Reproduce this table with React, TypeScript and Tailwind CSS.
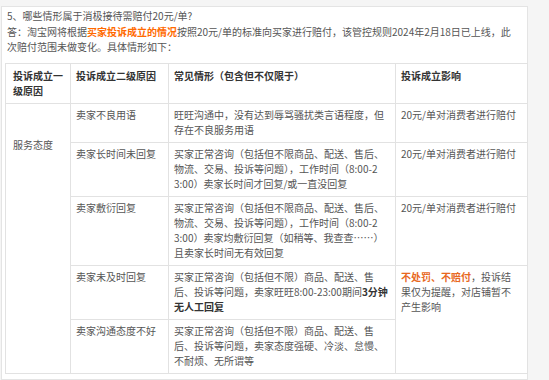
const font = { fontFamily: '"Noto Sans CJK SC", "Noto Sans", sans-serif' };

type Row = {
	reason: string;
	lines: React.ReactNode[];
	effect?: React.ReactNode[];
	effectSpan?: number;
};

const pay = ["20元/单对消费者进行赔付"];

const rows: Row[] = [
	{
		reason: "卖家不良用语",
		lines: ["旺旺沟通中，没有达到辱骂骚扰类言语程度，但", "存在不良服务用语"],
		effect: pay,
	},
	{
		reason: "卖家长时间未回复",
		lines: [
			"买家正常咨询（包括但不限商品、配送、售后、",
			"物流、交易、投诉等问题），工作时间（8:00-2",
			"3:00）卖家长时间才回复/或一直没回复",
		],
		effect: pay,
	},
	{
		reason: "卖家敷衍回复",
		lines: [
			"买家正常咨询（包括但不限商品、配送、售后、",
			"物流、交易、投诉等问题），工作时间（8:00-2",
			"3:00）卖家均敷衍回复（如稍等、我查查……）",
			"且卖家长时间无有效回复",
		],
		effect: pay,
	},
	{
		reason: "卖家未及时回复",
		lines: [
			"买家正常咨询（包括但不限）商品、配送、售",
			<>
				后、投诉等问题，卖家旺旺8:00-23:00期间<b className="text-[#333]">3分钟</b>
			</>,
			<b className="text-[#333]">无人工回复</b>,
		],
		effect: [
			<>
				<b className="text-[#e8681e]">不处罚、不赔付</b>，投诉结
			</>,
			"果仅为提醒，对店铺暂不",
			"产生影响",
		],
		effectSpan: 2,
	},
	{
		reason: "卖家沟通态度不好",
		lines: [
			"买家正常咨询（包括但不限）商品、配送、售",
			"后、投诉等问题，卖家态度强硬、冷淡、怠慢、",
			"不耐烦、无所谓等",
		],
	},
];

function Lines({ lines }: { lines: React.ReactNode[] }) {
	return (
		<>
			{lines.map((l, i) => (
				<div key={i} className="whitespace-nowrap h-[15px]">
					{l}
				</div>
			))}
		</>
	);
}

export default function App() {
	const cell = "border border-[#e2e2e2] align-top pt-[3px] pb-[5px] pl-[5px] pr-[4px]";
	return (
		<div className="w-[549px] h-[380px] bg-[#f5f5f5] pt-[6px] pl-[1px] overflow-hidden" style={font}>
			<div className="w-[527px] bg-white border border-[#e4e4e4] pt-[1px] pb-[5px] text-[10px] leading-[15.5px] text-[#555]">
				<div className="pl-[5px]">
					<div>5、哪些情形属于消极接待需赔付20元/单?</div>
					<div className="whitespace-nowrap">
						答：淘宝网将根据<b className="text-[#ff6a00]">买家投诉成立的情况</b>
						按照20元/单的标准向买家进行赔付，该管控规则2024年2月18日已上线，此
					</div>
					<div>次赔付范围未做变化。具体情形如下：</div>
				</div>
				<table className="ml-[3px] mt-[8px] table-fixed border-collapse w-[522px] leading-[15px]">
					<colgroup>
						<col className="w-[65px]" />
						<col className="w-[98px]" />
						<col className="w-[227px]" />
						<col className="w-[132px]" />
					</colgroup>
					<thead>
						<tr className="text-[#333] font-bold">
							<th className={`${cell} text-left pl-[7px] pt-[4px]`}>
								<div className="h-[15px]">投诉成立一</div>
								<div className="h-[15px]">级原因</div>
							</th>
							<th className={`${cell} text-left pt-[4px]`}>投诉成立二级原因</th>
							<th className={`${cell} text-left pt-[4px]`}>常见情形（包含但不仅限于）</th>
							<th className={`${cell} text-left pt-[4px]`}>投诉成立影响</th>
						</tr>
					</thead>
					<tbody>
						{rows.map((r, i) => (
							<tr key={r.reason}>
								{i === 0 && (
									<td rowSpan={5} className={`${cell} pl-[7px] pt-[33px]`}>
										服务态度
									</td>
								)}
								<td className={cell}>{r.reason}</td>
								<td className={cell}>
									<Lines lines={r.lines} />
								</td>
								{r.effect && (
									<td rowSpan={r.effectSpan ?? 1} className={cell}>
										<Lines lines={r.effect} />
									</td>
								)}
							</tr>
						))}
					</tbody>
				</table>
			</div>
		</div>
	);
}
